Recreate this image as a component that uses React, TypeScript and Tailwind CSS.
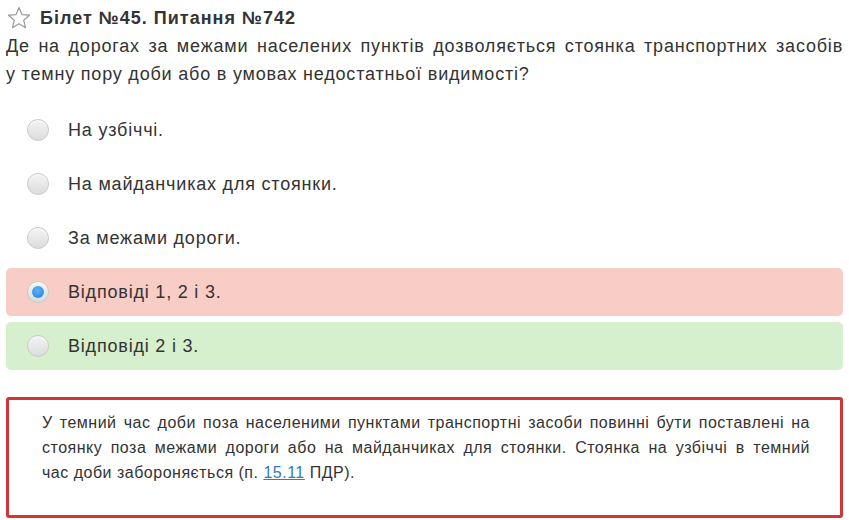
import React from "react";

const options = [
  { text: "На узбіччі.", bg: "", checked: false },
  { text: "На майданчиках для стоянки.", bg: "", checked: false },
  { text: "За межами дороги.", bg: "", checked: false },
  { text: "Відповіді 1, 2 і 3.", bg: "bg-[#f8cdc6]", checked: true },
  { text: "Відповіді 2 і 3.", bg: "bg-[#d6f0cd]", checked: false },
];

function Radio({ checked }: { checked: boolean }) {
  return (
    <span className="relative flex h-[22px] w-[22px] items-center justify-center rounded-full border border-[#c9c9c9] bg-[linear-gradient(#f4f4f4,#dcdcdc)] shadow-[inset_0_1px_1px_rgba(255,255,255,0.8)]">
      {checked && (
        <span className="h-[12px] w-[12px] rounded-full bg-[radial-gradient(circle_at_45%_35%,#5fb3f5,#1e80e0)]" />
      )}
    </span>
  );
}

export default function App() {
  return (
    <div
      className="bg-white px-[6px] text-[#333]"
      style={{ fontFamily: '"Liberation Sans", Arial, sans-serif' }}
    >
      <div className="flex h-[28px] items-center pt-[7px]">
        <svg
          width="24"
          height="24"
          viewBox="0 0 24 24"
          className="ml-[1px] mr-[9px]"
          fill="none"
          stroke="#9a9a9a"
          strokeWidth="1.2"
          strokeLinejoin="round"
        >
          <polygon points="12,1.5 14.9,8.6 22.5,9.2 16.7,14.2 18.5,21.7 12,17.7 5.5,21.7 7.3,14.2 1.5,9.2 9.1,8.6" />
        </svg>
        <span className="text-[18px] font-bold leading-[28px] tracking-[1px]">Білет №45. Питання №742</span>
      </div>
      <p className="mt-[4px] text-[18px] leading-[28px] tracking-[0.8px]">
        <span className="block whitespace-nowrap text-justify [text-align-last:justify]">
          Де на дорогах за межами населених пунктів дозволяється стоянка транспортних засобів
        </span>
        <span className="block">у темну пору доби або в умовах недостатньої видимості?</span>
      </p>
      <div className="mt-[18px] flex flex-col gap-[6px]">
        {options.map((o, i) => (
          <div key={i} className={`flex h-[48px] items-center rounded-[5px] pl-[21px] ${o.bg}`}>
            <Radio checked={o.checked} />
            <span className="ml-[19px] text-[18px] tracking-[0.8px]">{o.text}</span>
          </div>
        ))}
      </div>
      <div className="mt-[27px] rounded-[3px] border-[3px] border-[#d13535] pb-[30px] pl-[33px] pr-[30px] pt-[10px]">
        <p className="text-[16px] leading-[25px] tracking-[0.5px]">
          <span className="block whitespace-nowrap text-justify [text-align-last:justify]">
            У темний час доби поза населеними пунктами транспортні засоби повинні бути поставлені на
          </span>
          <span className="block whitespace-nowrap text-justify [text-align-last:justify]">
            стоянку поза межами дороги або на майданчиках для стоянки. Стоянка на узбіччі в темний
          </span>
          <span className="block">
            час доби забороняється (п.{" "}
            <a href="#" className="text-[#337ab7] underline">15.11</a> ПДР).
          </span>
        </p>
      </div>
    </div>
  );
}
